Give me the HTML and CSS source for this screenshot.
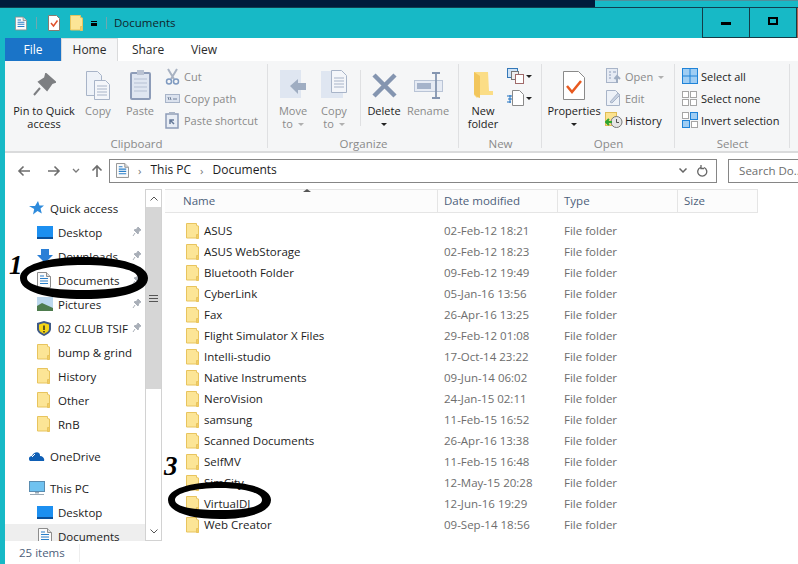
FILE: index.html
```html
<!DOCTYPE html>
<html lang="en">
<head>
<meta charset="utf-8">
<title>Documents</title>
<link rel="stylesheet" href="styles.css">
</head>
<body>
<svg class="defs" width="0" height="0" aria-hidden="true">
  <symbol id="folder" viewBox="0 0 13 16"><path d="M.5.500h10v2l2 .5v12H.5z" fill="#fce596" stroke="#e8c45e"/><path d="M10.500 15.500v-4h2v4z" fill="#f3cd63" stroke="#e8c45e"/></symbol>
  <symbol id="doc" viewBox="0 0 14 16"><path d="M.5.500h9l4 4v11H.5z" fill="#fbfbfb" stroke="#8d8d8d"/><path d="M9.500.5v4h4" fill="#ddd" stroke="#8d8d8d"/><path d="M3 4h4M3 6.500h8M3 9h8M3 11.500h8" stroke="#2a7fc9" stroke-width="1.200"/></symbol>
  <symbol id="pin" viewBox="0 0 10 12"><path d="M6 1l3 3-2 1-1 3-4-4 3-1zM3 7l-2 3" fill="#a9afb8" stroke="#a9afb8"/></symbol>
  <symbol id="lgpin" viewBox="0 0 24 24"><path d="M14 1l9 8-3 1-5 7-8-8 6-4zM8 15l-6 7" fill="#7d7f82" stroke="#7d7f82" stroke-width="2"/></symbol>
</svg>

<div class="topstrip"><div class="strip-dark"></div><div class="strip-light"></div></div>

<header class="titlebar">
  <svg class="tb-doc"><use href="#doc"/></svg>
  <span class="tb-sep"></span>
  <svg class="tb-check" viewBox="0 0 12 16"><path d="M.5.500h8l3 3v12H.5z" fill="#fff" stroke="#8b7a70"/><path d="M3 8l2.500 3L9.500 5.500" fill="none" stroke="#e0502a" stroke-width="1.500"/></svg>
  <svg class="tb-folder"><use href="#folder"/></svg>
  <span class="tb-drop"></span>
  <span class="tb-sep tb-sep2"></span>
  <span class="tb-title">Documents</span>
  <span class="tb-spacer"></span>
  <div class="winbtn"><span class="min-glyph"></span></div>
  <div class="winbtn"><span class="max-glyph"></span></div>
  <div class="winclose"></div>
</header>

<main class="window">
  <nav class="tabs">
    <span class="tab tab-file">File</span>
    <span class="tab tab-home">Home</span>
    <span class="tab tab-share">Share</span>
    <span class="tab tab-view">View</span>
  </nav>

  <section class="ribbon">
    <div class="group g-clip">
      <div class="group-items">
        <div class="lg w-pin"><div class="lg-icon"><svg width="24" height="24"><use href="#lgpin"/></svg></div><span class="dark">Pin to Quick<br>access</span></div>
        <div class="lg w-copy"><div class="lg-icon"><svg width="24" height="29" viewBox="0 0 24 29"><path d="M.500.500h11l4 4v20H.500z" fill="#eef2f8" stroke="#a8b4c8"/><path d="M8.500 9.500h11l4 4v15h-15z" fill="#f4f6fa" stroke="#a8b4c8"/><path d="M11 15h10M11 18h10M11 21h10M11 24h10" stroke="#a8b4c8"/></svg></div><span>Copy</span></div>
        <div class="lg w-paste"><div class="lg-icon"><svg width="21" height="30" viewBox="0 0 21 30"><rect x="1" y="3" width="19" height="26" rx="1" fill="#dfe6f1" stroke="#8d9cb8" stroke-width="2"/><rect x="7" y="0" width="7" height="5" fill="#b9c2d2"/><path d="M4 9h13M4 13h13M4 17h13M4 21h13" stroke="#b5c0d3"/></svg></div><span>Paste</span></div>
        <div class="smalls">
          <div class="sm i-clip1"><svg width="15" height="17" viewBox="0 0 15 17"><path d="M3 1l6 10M12 1L6 11" stroke="#a8b2c2" stroke-width="2"/><circle cx="4" cy="13.500" r="2.500" fill="none" stroke="#7f9ac0" stroke-width="1.500"/><circle cx="11" cy="13.500" r="2.500" fill="none" stroke="#7f9ac0" stroke-width="1.500"/></svg><span>Cut</span></div>
          <div class="sm i-clip1"><svg width="15" height="9" viewBox="0 0 15 9"><rect x=".5" y=".5" width="14" height="8" fill="#dbe2ee" stroke="#a8b4c8"/><path d="M3 3l1 3M5 3l1 3M8 5h4" stroke="#6f7f98"/></svg><span>Copy path</span></div>
          <div class="sm i-clip1"><svg width="15" height="17" viewBox="0 0 15 17"><rect x="1" y="2" width="12" height="14" fill="#e8edf5" stroke="#8d9cb8" stroke-width="1.500"/><rect x="4" y="0" width="6" height="3" fill="#a9b4c6"/><path d="M5 12V8h4M5 8l4 4" stroke="#667a99" stroke-width="1.500" fill="none"/></svg><span>Paste shortcut</span></div>
        </div>
      </div>
      <div class="group-label">Clipboard</div>
    </div>

    <div class="group g-org">
      <div class="group-items">
        <div class="lg w-move"><div class="lg-icon"><svg width="26" height="30" viewBox="0 0 26 30"><rect x="0" y="0" width="21" height="28" fill="#dfe6f1"/><path d="M10 16l8-7v4h8v7h-8v4z" fill="#9fadc2"/></svg></div><span>Move<br>to <i class="mini-caret"></i></span></div>
        <div class="lg w-copyto"><div class="lg-icon"><svg width="26" height="30" viewBox="0 0 26 30"><rect x="0" y="1" width="22" height="27" fill="#dfe6f1"/><path d="M10.500.5h10l5 5v17h-15z" fill="#f4f6fa" stroke="#a8b4c8"/><path d="M13 8h10M13 11h10M13 14h10M13 17h10" stroke="#a8b4c8"/></svg></div><span>Copy<br>to <i class="mini-caret"></i></span></div>
        <span class="inner-sep"></span>
        <div class="lg w-del"><div class="lg-icon"><svg width="25" height="25" viewBox="0 0 25 25"><path d="M2 2l21 21M23 2L2 23" stroke="#8495b0" stroke-width="4.500"/></svg></div><span class="dark">Delete<br><i class="dark-caret"></i></span></div>
        <div class="lg w-ren"><div class="lg-icon"><svg width="29" height="27" viewBox="0 0 29 27"><rect x=".5" y="8.500" width="28" height="11" fill="#e6ebf4" stroke="#b9c4d6"/><rect x="3" y="11" width="14" height="6" fill="#a5b3ca"/><path d="M18 1h4v25h-4M26 1h-4M26 26h-4" fill="none" stroke="#8495b0" stroke-width="1.800"/></svg></div><span>Rename</span></div>
      </div>
      <div class="group-label">Organize</div>
    </div>

    <div class="group g-new">
      <div class="group-items">
        <div class="lg w-new"><div class="lg-icon"><svg width="19" height="28" viewBox="0 0 19 28"><path d="M0 1h14l1 19h4v4H5l-2 3-3-3z" fill="#fbdd86"/><path d="M0 1l6 4v22l-3-1-3-3z" fill="#f2c65c"/></svg></div><span class="dark">New<br>folder</span></div>
        <div class="newsmall">
          <div class="ns"><svg width="17" height="16" viewBox="0 0 17 16"><rect x=".5" y=".5" width="10" height="9" fill="#cfe3f6" stroke="#3478b8"/><rect x="4.500" y="3.500" width="7" height="8" fill="#eee" stroke="#777"/><rect x="8.500" y="6.500" width="8" height="9" fill="#fff" stroke="#a06a6a"/></svg><i class="dark-caret"></i></div>
          <div class="ns"><svg width="17" height="16" viewBox="0 0 17 16"><path d="M5.500.5h7l4 4v11h-11z" fill="#fff" stroke="#8a8a8a"/><path d="M0 6h5M1 9h4M0 12h4M3 5v8" stroke="#1b6fc0"/></svg><i class="dark-caret"></i></div>
        </div>
      </div>
      <div class="group-label">New</div>
    </div>

    <div class="group g-open">
      <div class="group-items">
        <div class="lg w-prop"><div class="lg-icon"><svg width="22" height="29" viewBox="0 0 22 29"><path d="M.500.500h15l6 6v22H.500z" fill="#fff" stroke="#8a8a8a"/><path d="M4 15l5 6 9-11" fill="none" stroke="#e8591f" stroke-width="2.500"/></svg></div><span class="dark">Properties<br><i class="dark-caret"></i></span></div>
        <div class="smalls">
          <div class="sm i-open"><svg width="15" height="16" viewBox="0 0 15 16"><rect x=".5" y=".5" width="11" height="14" fill="#e6ebf4" stroke="#a8b4c8"/><path d="M3 4h2M3 7h2M3 10h2M7 4h3" stroke="#8d9cb8"/><path d="M11 15V9M8.500 11l2.500-3 3 3" fill="none" stroke="#9fadc2" stroke-width="2"/></svg><span>Open <i class="mini-caret"></i></span></div>
          <div class="sm i-open"><svg width="15" height="16" viewBox="0 0 15 16"><path d="M.500.500h9l4 4v11H.500z" fill="#eef2f8" stroke="#a8b4c8"/><path d="M4 12L12 3l2 2-8 8z" fill="#c8d2e2" stroke="#a8b4c8"/></svg><span>Edit</span></div>
          <div class="sm i-open dark"><svg width="18" height="16" viewBox="0 0 18 16"><rect x=".5" y=".5" width="11" height="13" fill="#fbe28f" stroke="#e0bc55"/><circle cx="11.500" cy="10" r="5.500" fill="#e5e5e5" stroke="#777"/><path d="M11.500 7v3.500H14" stroke="#555" fill="none"/><path d="M2 10h5M4 7l-3 3 3 3" stroke="#2fa52f" stroke-width="2" fill="none"/></svg><span>History</span></div>
        </div>
      </div>
      <div class="group-label">Open</div>
    </div>

    <div class="group g-sel">
      <div class="group-items">
        <div class="smalls">
          <div class="sm i-sel dark"><svg width="16" height="16" viewBox="0 0 16 16"><rect x=".5" y=".5" width="15" height="15" fill="#9fcdf3" stroke="#1f83d8"/><path d="M8 0v16M0 8h16" stroke="#1f83d8"/></svg><span>Select all</span></div>
          <div class="sm i-sel dark"><svg width="15" height="15" viewBox="0 0 15 15"><g fill="#fff" stroke="#a5a5a5"><rect x=".5" y=".5" width="6" height="6"/><rect x="8.500" y=".5" width="6" height="6"/><rect x=".5" y="8.500" width="6" height="6"/><rect x="8.500" y="8.500" width="6" height="6"/></g></svg><span>Select none</span></div>
          <div class="sm i-sel dark"><svg width="16" height="16" viewBox="0 0 16 16"><rect x=".5" y=".5" width="6" height="6" fill="#fff" stroke="#a5a5a5"/><rect x="8.500" y=".5" width="7" height="7" fill="#9fcdf3" stroke="#1f83d8"/><rect x=".5" y="8.500" width="7" height="7" fill="#9fcdf3" stroke="#1f83d8"/><rect x="9.500" y="9.500" width="6" height="6" fill="#fff" stroke="#a5a5a5"/></svg><span>Invert selection</span></div>
        </div>
      </div>
      <div class="group-label">Select</div>
    </div>
  </section>

  <div class="navbar">
    <svg class="nb-back" width="14" height="12" viewBox="0 0 14 12"><path d="M13 6H2M6.500 1.500L2 6l4.500 4.500" fill="none" stroke="#6d6d6d" stroke-width="1.600"/></svg>
    <svg class="nb-fwd" width="14" height="12" viewBox="0 0 14 12"><path d="M1 6h11M7.500 1.500L12 6l-4.500 4.500" fill="none" stroke="#6d6d6d" stroke-width="1.600"/></svg>
    <svg class="nb-down" width="8" height="5" viewBox="0 0 8 5"><path d="M1 1l3 3 3-3" fill="none" stroke="#7a7a7a" stroke-width="1.300"/></svg>
    <svg class="nb-up" width="12" height="13" viewBox="0 0 12 13"><path d="M6 13V2M1.500 6.500L6 2l4.500 4.500" fill="none" stroke="#6d6d6d" stroke-width="1.600"/></svg>
    <div class="address">
      <svg class="ad-doc"><use href="#doc"/></svg>
      <span class="crumb-chev">›</span><span class="crumb">This PC</span>
      <span class="crumb-chev">›</span><span class="crumb">Documents</span>
      <span class="tb-spacer"></span>
      <svg width="8" height="5" viewBox="0 0 8 5"><path d="M.5.500L4 4 7.500.5" fill="none" stroke="#666" stroke-width="1.500"/></svg>
      <svg class="ad-refresh" width="11" height="12" viewBox="0 0 11 12"><path d="M7 2.500a4.500 4.500 0 1 1-3.500 0M4 0v3.500h3" fill="none" stroke="#666" stroke-width="1.300"/></svg>
    </div>
    <div class="search">Search Do...</div>
  </div>

  <div class="content">
    <aside class="navpane">
      <div class="ni l0"><svg class="ni-ic" width="15" height="14" viewBox="0 0 15 14"><path d="M9 0l1.500 4.500H15l-3.500 3 1.300 5L8.500 10 4 13.500l1.200-5.500L0 5h6z" fill="#2e8bdc"/></svg><span>Quick access</span></div>
      <div class="ni l1"><svg class="ni-ic" width="16" height="13" viewBox="0 0 16 13"><rect width="16" height="12" fill="#1c8ff0"/><rect y="11" width="16" height="2" fill="#0a4f99"/></svg><span>Desktop</span><svg class="ni-pin"><use href="#pin"/></svg></div>
      <div class="ni l1"><svg class="ni-ic" width="16" height="15" viewBox="0 0 16 15"><path d="M4 0h8v6h4l-8 8-8-8h4z" fill="#2a7fd6"/></svg><span>Downloads</span><svg class="ni-pin"><use href="#pin"/></svg></div>
      <div class="ni l1"><svg class="ni-ic" width="14" height="16"><use href="#doc"/></svg><span>Documents</span><svg class="ni-pin"><use href="#pin"/></svg></div>
      <div class="ni l1"><svg class="ni-ic" width="16" height="14" viewBox="0 0 16 14"><rect width="16" height="14" fill="#bcd8ee"/><path d="M0 14V9l5-3 11 5v3z" fill="#4e7c4e"/></svg><span>Pictures</span><svg class="ni-pin"><use href="#pin"/></svg></div>
      <div class="ni l1"><svg class="ni-ic" width="14" height="15" viewBox="0 0 14 15"><path d="M7 0l7 2v6c0 3-3 5-7 7-4-2-7-4-7-7V2z" fill="#3f5a87"/><path d="M7 2l5 1.500V8c0 2-2 3.500-5 5-3-1.500-5-3-5-5V3.500z" fill="#f5d516"/><path d="M7 4.500V9M7 10v1.500" stroke="#222" stroke-width="1.400"/></svg><span>02 CLUB TSIF</span><svg class="ni-pin"><use href="#pin"/></svg></div>
      <div class="ni l1"><svg class="ni-ic" width="13" height="16"><use href="#folder"/></svg><span>bump &amp; grind</span></div>
      <div class="ni l1"><svg class="ni-ic" width="13" height="16"><use href="#folder"/></svg><span>History</span></div>
      <div class="ni l1"><svg class="ni-ic" width="13" height="16"><use href="#folder"/></svg><span>Other</span></div>
      <div class="ni l1"><svg class="ni-ic" width="13" height="16"><use href="#folder"/></svg><span>RnB</span></div>
      <div class="ni l0 gap-top"><svg class="ni-ic" width="16" height="10" viewBox="0 0 16 10"><path d="M1 10C-1 8 0 5 3 5c1-3 5-5 7-3 1 1 1 2 1 3 3 0 5 3 4 5z" fill="#0f5fb5"/><path d="M3 6l3-3" stroke="#fff"/></svg><span>OneDrive</span></div>
      <div class="ni l0 gap-top"><svg class="ni-ic" width="16" height="14" viewBox="0 0 16 14"><rect x=".5" y=".5" width="15" height="10" fill="#6fc2f0" stroke="#5a8cb0"/><path d="M6 11h4v1.500H6zM1 13h14v1H1z" fill="#9aa9b5"/></svg><span>This PC</span></div>
      <div class="ni l1"><svg class="ni-ic" width="16" height="13" viewBox="0 0 16 13"><rect width="16" height="12" fill="#1c8ff0"/><rect y="11" width="16" height="2" fill="#0a4f99"/></svg><span>Desktop</span></div>
      <div class="ni l1 selected"><svg class="ni-ic" width="14" height="16"><use href="#doc"/></svg><span>Documents</span></div>
    </aside>

    <div class="scrollbar">
      <div class="sb-btn"><svg width="8" height="5" viewBox="0 0 8 5"><path d="M.5 4.500L4 1l3.500 3.500" fill="none" stroke="#555"/></svg></div>
      <div class="sb-thumb"><span class="grip"></span></div>
      <div class="sb-track"></div>
      <div class="sb-btn"><svg width="8" height="5" viewBox="0 0 8 5"><path d="M.5.500L4 4 7.500.5" fill="none" stroke="#555"/></svg></div>
    </div>

    <div class="files">
      <div class="fhead">
        <span class="fh fh-name"><i class="sort"></i>Name</span>
        <span class="fh fh-date">Date modified</span>
        <span class="fh fh-type">Type</span>
        <span class="fh fh-size">Size</span>
      </div>
      <div class="rows">
        <div class="row"><svg class="f-ic"><use href="#folder"/></svg><span class="c-name">ASUS</span><span class="c-date">02-Feb-12 18:21</span><span class="c-type">File folder</span></div>
        <div class="row"><svg class="f-ic"><use href="#folder"/></svg><span class="c-name">ASUS WebStorage</span><span class="c-date">02-Feb-12 18:23</span><span class="c-type">File folder</span></div>
        <div class="row"><svg class="f-ic"><use href="#folder"/></svg><span class="c-name">Bluetooth Folder</span><span class="c-date">09-Feb-12 19:49</span><span class="c-type">File folder</span></div>
        <div class="row"><svg class="f-ic"><use href="#folder"/></svg><span class="c-name">CyberLink</span><span class="c-date">05-Jan-16 13:56</span><span class="c-type">File folder</span></div>
        <div class="row"><svg class="f-ic"><use href="#folder"/></svg><span class="c-name">Fax</span><span class="c-date">26-Apr-16 13:25</span><span class="c-type">File folder</span></div>
        <div class="row"><svg class="f-ic"><use href="#folder"/></svg><span class="c-name">Flight Simulator X Files</span><span class="c-date">29-Feb-12 01:08</span><span class="c-type">File folder</span></div>
        <div class="row"><svg class="f-ic"><use href="#folder"/></svg><span class="c-name">Intelli-studio</span><span class="c-date">17-Oct-14 23:22</span><span class="c-type">File folder</span></div>
        <div class="row"><svg class="f-ic"><use href="#folder"/></svg><span class="c-name">Native Instruments</span><span class="c-date">09-Jun-14 06:02</span><span class="c-type">File folder</span></div>
        <div class="row"><svg class="f-ic"><use href="#folder"/></svg><span class="c-name">NeroVision</span><span class="c-date">24-Jan-15 02:11</span><span class="c-type">File folder</span></div>
        <div class="row"><svg class="f-ic"><use href="#folder"/></svg><span class="c-name">samsung</span><span class="c-date">11-Feb-15 16:52</span><span class="c-type">File folder</span></div>
        <div class="row"><svg class="f-ic"><use href="#folder"/></svg><span class="c-name">Scanned Documents</span><span class="c-date">26-Apr-16 13:38</span><span class="c-type">File folder</span></div>
        <div class="row"><svg class="f-ic"><use href="#folder"/></svg><span class="c-name">SelfMV</span><span class="c-date">11-Feb-15 16:48</span><span class="c-type">File folder</span></div>
        <div class="row"><svg class="f-ic"><use href="#folder"/></svg><span class="c-name">SimCity</span><span class="c-date">12-May-15 20:28</span><span class="c-type">File folder</span></div>
        <div class="row"><svg class="f-ic"><use href="#folder"/></svg><span class="c-name">VirtualDJ</span><span class="c-date">12-Jun-16 19:29</span><span class="c-type">File folder</span></div>
        <div class="row"><svg class="f-ic"><use href="#folder"/></svg><span class="c-name">Web Creator</span><span class="c-date">09-Sep-14 18:56</span><span class="c-type">File folder</span></div>
        <div class="row"><svg class="f-ic" viewBox="0 0 13 16"><rect x="0" y="3" width="13" height="13" fill="#d9622b"/><rect x="3" y="3" width="5" height="4" fill="#2a6fc0"/></svg></div>
      </div>
    </div>
  </div>

  <footer class="status"><span class="st-count">25 items</span></footer>
</main>

<svg class="annot" width="798" height="564" viewBox="0 0 798 564" aria-hidden="true">
  <path fill-rule="evenodd" d="M84 257c37 0 64 8 64 21 0 14-27 21-64 21-38 0-64-7-64-21 0-13 26-21 64-21zM84 265c-33 0-57 5-57 13 0 8 22 12 56 12 33 0 55-4 55-12 0-8-22-13-54-13z"/>
  <path fill-rule="evenodd" d="M220 482c30 0 51 7 51 18 0 12-22 19-51 19-30 0-52-7-52-19 0-11 22-18 52-18zM220 488c-26 0-45 5-45 12 0 7 19 10 45 10 25 0 42-3 42-10 0-7-17-12-42-12z"/>
</svg>
<span class="note note-1">1</span>
<span class="note note-3">3</span>
</body>
</html>
```
FILE: styles.css
```css
* { box-sizing: border-box; }
html, body { margin: 0; height: 564px; overflow: hidden; }
body {
  background: #17b9c6;
  font-family: "Open Sans", "Noto Sans", sans-serif;
  font-size: 11.5px;
  color: #1c1c1c;
  display: flex;
  flex-direction: column;
  position: relative;
}
i { font-style: normal; }
.defs { position: absolute; }
svg { display: block; flex: none; }

.topstrip { display: flex; height: 8px; flex: none; border-bottom: 1px solid #0f3f50; }
.strip-dark { width: 595px; background: #001a3c; }
.strip-light { flex: 1; background: #17b9c6; border-top: 1px solid #4f8f9c; }

.titlebar { height: 30px; flex: none; display: flex; align-items: center; padding-left: 15px; }
.tb-doc { width: 12px; height: 15px; }
.tb-sep { width: 1px; height: 12px; background: #6fa8b0; margin: 0 11px 0 9px; }
.tb-check { width: 12px; height: 16px; margin-right: 10px; }
.tb-folder { width: 13px; height: 16px; }
.tb-drop { width: 6px; height: 5px; margin-left: 8px; border-top: 1px solid #000; border-bottom: 3px solid #000; }
.tb-sep2 { margin: 0 7px 0 9px; }
.tb-title { color: #10262c; margin-top: -2px; }
.tb-spacer { flex: 1; }
.winbtn { width: 47px; height: 30px; border-left: 1px solid #143c48; border-bottom: 1px solid #143c48; display: flex; align-items: center; justify-content: center; }
.winclose { width: 2px; height: 30px; background: #b5644f; border-left: 1px solid #143c48; }
.min-glyph { width: 10px; height: 3px; background: #000; margin-top: 2px; }
.max-glyph { width: 10px; height: 8px; border: 2px solid #000; margin-top: -4px; }

.window { margin-left: 5px; flex: 1; min-height: 0; background: #fff; display: flex; flex-direction: column; overflow: hidden; }

.tabs { height: 23px; flex: none; display: flex; background: #fff; font-size: 12px; }
.tab { height: 23px; line-height: 23px; text-align: center; color: #2b2b2b; }
.tab-file { width: 56px; background: #1a74c8; color: #fff; }
.tab-home { width: 57px; background: #f5f6f7; border: 1px solid #dadbdc; border-bottom: 0; line-height: 22px; }
.tab-share { width: 60px; }
.tab-view { width: 52px; }

.ribbon { height: 92px; flex: none; display: flex; background: #f5f6f7; border-bottom: 2px solid #dadbdc; font-size: 11px; }
.group { display: flex; flex-direction: column; padding-top: 5px; position: relative; }
.group::after { content: ""; position: absolute; right: 0; top: 3px; bottom: 3px; width: 1px; background: #dfe0e2; }
.group-items { display: flex; height: 71px; flex: none; color: #8a8a8a; }
.group-label { text-align: center; color: #8a8a8a; line-height: 14px; font-size: 11.5px; }
.g-clip { width: 263px; }
.g-clip .group-items { padding-left: 4px; }
.g-org { width: 191px; }
.g-org .group-items { padding-left: 7px; }
.g-new { width: 83px; }
.g-new .group-items { padding-left: 2px; }
.g-open { width: 133px; }
.g-open .group-items { padding-left: 4px; }
.g-sel { width: 115px; }
.g-sel .group-items { padding-left: 7px; }

.lg { display: flex; flex-direction: column; align-items: center; text-align: center; line-height: 13px; }
.lg-icon { height: 38px; display: flex; align-items: center; justify-content: center; flex: none; }
.dark { color: #1c1c1c; }
.w-pin { width: 70px; }
.w-copy { width: 38px; }
.w-paste { width: 46px; margin-right: 2px; }
.w-move { width: 36px; }
.w-copyto { width: 36px; margin-left: 5px; }
.inner-sep { width: 1px; height: 56px; background: #dfe0e2; margin: 4px 1px 0 8px; }
.w-del { width: 44px; }
.w-ren { width: 44px; }
.w-new { width: 44px; }
.w-prop { width: 56px; }
.mini-caret { display: inline-block; width: 0; height: 0; border: 3px solid transparent; border-top-color: #b0b0b0; border-bottom: 0; vertical-align: 2px; margin-left: 2px; }
.dark-caret { display: inline-block; width: 0; height: 0; border: 3px solid transparent; border-top-color: #222; border-bottom: 0; vertical-align: 2px; }
.smalls { display: flex; flex-direction: column; margin-top: -1px; }
.sm { height: 22px; display: flex; align-items: center; gap: 4px; }
.i-clip1 { display: grid; grid-template-columns: 15px auto; gap: 4px; align-items: center; justify-content: start; }
.i-open { display: grid; grid-template-columns: 15px auto; gap: 4px; align-items: center; justify-content: start; margin-left: 4px; }
.i-open.dark svg { margin-left: -1px; }
.i-sel { display: grid; grid-template-columns: 16px auto; gap: 3px; align-items: center; justify-content: start; }
.newsmall { display: flex; flex-direction: column; gap: 6px; padding-top: 2px; margin-left: 2px; }
.ns { display: flex; align-items: center; gap: 2px; }

.navbar { height: 36px; flex: none; display: flex; align-items: center; padding-bottom: 1px; background: #fff; }
.nb-back { margin-left: 12px; }
.nb-fwd { margin-left: 16px; }
.nb-down { margin-left: 11px; }
.nb-up { margin-left: 11px; }
.address { width: 609px; height: 24px; margin-left: 6px; border: 1px solid #868686; display: flex; align-items: center; padding: 0 8px 0 6px; }
.ad-doc { width: 13px; height: 15px; }
.crumb-chev { color: #777; margin: 0 9px; line-height: 1; }
.crumb { color: #1c1c1c; margin-top: -2px; font-size: 12px; }
.ad-refresh { margin-left: 10px; }
.search { width: 70px; height: 24px; margin-left: 11px; border: 1px solid #868686; border-right: 0; line-height: 21px; padding-left: 10px; color: #6d6d6d; white-space: nowrap; overflow: hidden; }

.content { flex: 1; min-height: 0; display: flex; overflow: hidden; }
.navpane { width: 140px; flex: none; padding-top: 7px; overflow: hidden; }
.ni { height: 24px; display: flex; align-items: center; position: relative; white-space: nowrap; }
.ni.l0 { padding-left: 24px; }
.ni.l1 { padding-left: 32px; }
.ni span { position: absolute; }
.ni.l0 span { left: 45px; }
.ni.l1 span { left: 53px; }
.ni-pin { width: 10px; height: 12px; position: absolute; left: 127px; }
.gap-top { margin-top: 8px; }
.selected { background: #eeeeee; }
.selected .ni-ic { margin-left: 1px; }

.scrollbar { width: 17px; flex: none; display: flex; flex-direction: column; border: 1px solid #d2d2d2; }
.sb-btn { height: 17px; flex: none; display: flex; align-items: center; justify-content: center; background: #fff; }
.sb-thumb { height: 182px; flex: none; background: #d6d6d6; display: flex; align-items: center; justify-content: center; }
.grip { width: 9px; height: 7px; border-top: 1px solid #555; border-bottom: 1px solid #555; position: relative; }
.grip::after { content: ""; position: absolute; left: 0; right: 0; top: 2px; height: 1px; background: #555; }
.sb-track { flex: 1; }

.files { flex: 1; min-width: 0; margin-left: 3px; overflow: hidden; }
.fhead { height: 24px; width: 593px; display: flex; border-top: 1px solid #e5e5e5; border-bottom: 1px solid #e5e5e5; border-right: 1px solid #e5e5e5; background: #fcfcfc; color: #4c607a; position: relative; }
.fh { line-height: 22px; padding-left: 6px; border-right: 1px solid #e5e5e5; }
.fh-name { width: 273px; padding-left: 18px; }
.fh-date { width: 120px; }
.fh-type { width: 120px; }
.fh-size { flex: 1; border-right: 0; }
.sort { position: absolute; left: 138px; top: -1px; width: 0; height: 0; border: 4px solid transparent; border-bottom: 3px solid #555; border-top: 0; }
.rows { padding-top: 7px; }
.row { height: 21px; display: flex; align-items: center; padding-left: 21px; white-space: nowrap; }
.f-ic { width: 13px; height: 16px; margin-right: 5px; }
.c-name { width: 240px; color: #1c1c1c; }
.c-date { width: 120px; color: #6d6d6d; }
.c-type { color: #6d6d6d; }

.status { height: 23px; flex: none; background: #fff; display: flex; align-items: center; position: relative; z-index: 1; }
.st-count { padding: 0 14px; color: #4c607a; border-right: 1px solid #eeeeee; line-height: 18px; }

.annot { position: absolute; left: 0; top: 0; pointer-events: none; }
.note { position: absolute; font-family: "Liberation Serif", serif; font-style: italic; font-weight: bold; font-size: 27px; line-height: 1; color: #000; }
.note-1 { left: 9px; top: 252px; }
.note-3 { left: 164px; top: 453px; }
```
